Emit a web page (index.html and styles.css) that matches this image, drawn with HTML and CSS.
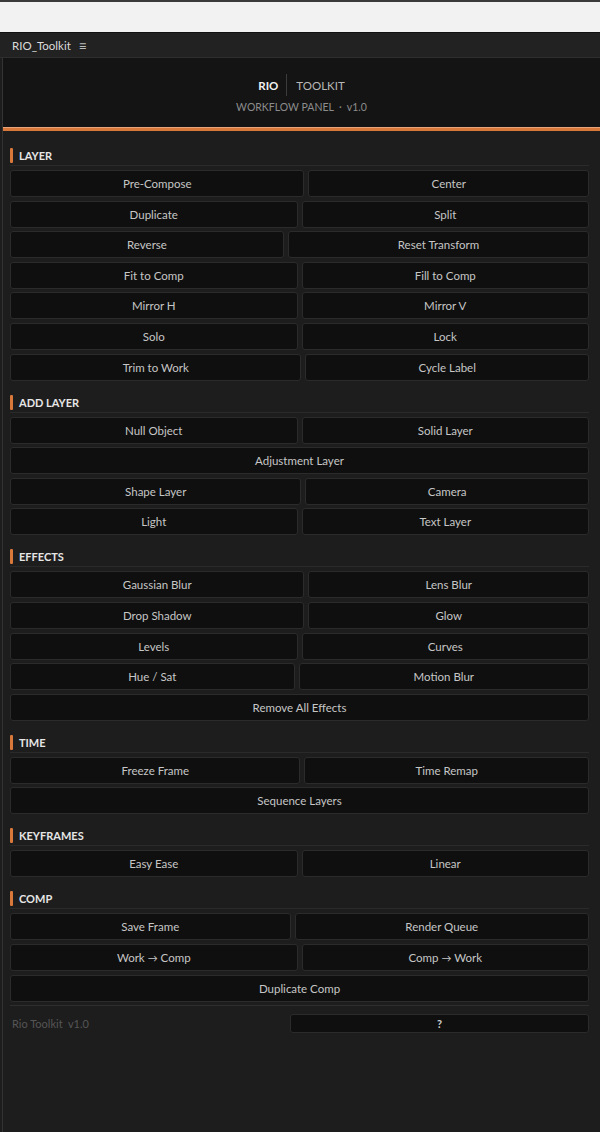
FILE: index.html
```html
<!DOCTYPE html>
<html lang="en">
<head>
    <meta charset="UTF-8">
    <meta name="viewport" content="width=device-width, initial-scale=1.0">
    <title>RIO Toolkit</title>
    <link rel="stylesheet" href="styles.css">
</head>
<body>
    <div class="chrome"></div>

    <div class="tabbar">
        <span class="tab-title">RIO_Toolkit</span>
        <span class="tab-menu">&#8801;</span>
    </div>

    <div class="panel">
        <header class="panel-head">
            <div class="brand">
                <span class="brand-main">RIO</span>
                <span class="brand-sep"></span>
                <span class="brand-sub">TOOLKIT</span>
            </div>
            <div class="brand-meta">WORKFLOW PANEL &nbsp;&middot;&nbsp; v1.0</div>
        </header>

        <main class="panel-body">
            <section class="group">
                <h2 class="group-title">LAYER</h2>
                <div class="rows">
                    <div class="row"><button class="btn wide-3">Pre-Compose</button><button class="btn">Center</button></div>
                    <div class="row"><button class="btn">Duplicate</button><button class="btn">Split</button></div>
                    <div class="row"><button class="btn">Reverse</button><button class="btn wide-4">Reset Transform</button></div>
                    <div class="row"><button class="btn">Fit to Comp</button><button class="btn">Fill to Comp</button></div>
                    <div class="row"><button class="btn">Mirror H</button><button class="btn">Mirror V</button></div>
                    <div class="row"><button class="btn">Solo</button><button class="btn">Lock</button></div>
                    <div class="row"><button class="btn wide-2">Trim to Work</button><button class="btn">Cycle Label</button></div>
                </div>
            </section>

            <section class="group">
                <h2 class="group-title">ADD LAYER</h2>
                <div class="rows">
                    <div class="row"><button class="btn">Null Object</button><button class="btn">Solid Layer</button></div>
                    <div class="row"><button class="btn">Adjustment Layer</button></div>
                    <div class="row"><button class="btn wide-2">Shape Layer</button><button class="btn">Camera</button></div>
                    <div class="row"><button class="btn">Light</button><button class="btn">Text Layer</button></div>
                </div>
            </section>

            <section class="group">
                <h2 class="group-title">EFFECTS</h2>
                <div class="rows">
                    <div class="row"><button class="btn wide-3">Gaussian Blur</button><button class="btn">Lens Blur</button></div>
                    <div class="row"><button class="btn wide-3">Drop Shadow</button><button class="btn">Glow</button></div>
                    <div class="row"><button class="btn">Levels</button><button class="btn">Curves</button></div>
                    <div class="row"><button class="btn">Hue / Sat</button><button class="btn wide-1">Motion Blur</button></div>
                    <div class="row"><button class="btn">Remove All Effects</button></div>
                </div>
            </section>

            <section class="group">
                <h2 class="group-title">TIME</h2>
                <div class="rows">
                    <div class="row"><button class="btn wide-1">Freeze Frame</button><button class="btn">Time Remap</button></div>
                    <div class="row"><button class="btn">Sequence Layers</button></div>
                </div>
            </section>

            <section class="group">
                <h2 class="group-title">KEYFRAMES</h2>
                <div class="rows">
                    <div class="row"><button class="btn">Easy Ease</button><button class="btn">Linear</button></div>
                </div>
            </section>

            <section class="group">
                <h2 class="group-title">COMP</h2>
                <div class="rows">
                    <div class="row"><button class="btn">Save Frame</button><button class="btn wide-3">Render Queue</button></div>
                    <div class="row"><button class="btn">Work <span class="arrow">&rarr;</span> Comp</button><button class="btn">Comp <span class="arrow">&rarr;</span> Work</button></div>
                    <div class="row"><button class="btn">Duplicate Comp</button></div>
                </div>
            </section>

            <footer class="panel-foot">
                <span class="foot-text">Rio Toolkit &nbsp;v1.0</span>
                <button class="btn help">?</button>
            </footer>
        </main>
    </div>
</body>
</html>
```

FILE: styles.css
```css
html, body {
    margin: 0;
    background-color: #1d1d1d;
}

body {
    font-family: Lato, "Open Sans", Arial, sans-serif;
    min-height: 1132px;
}

.chrome {
    height: 30px;
    background-color: #f2f2f2;
    border-top: 2px solid #3a3a3a;
}

.tabbar {
    height: 24px;
    display: flex;
    align-items: center;
    padding-left: 12px;
    background-color: #222;
    border-top: 1px solid #111;
    border-bottom: 1px solid #2e2e2e;
}

.tab-title {
    font-size: 11.5px;
    color: #dcdcdc;
}

.tab-menu {
    margin-left: 8px;
    font-size: 14px;
    color: #bbb;
}

.panel {
    margin-left: 2px;
    border-left: 1px solid #333;
    min-height: 1075px;
}

.panel-head {
    height: 52px;
    padding-top: 18px;
    background-color: #141414;
    border-bottom: 3px solid #d9783b;
    box-shadow: inset 0 -1px 0 #e9a37a;
    text-align: center;
}

.brand {
    display: flex;
    justify-content: center;
    align-items: center;
    height: 18px;
    font-size: 11.5px;
}

.brand-main {
    color: #f0f0f0;
    font-weight: bold;
}

.brand-sep {
    width: 1px;
    height: 22px;
    margin: 0 9px 0 8px;
    background-color: #3c3c3c;
}

.brand-sub {
    color: #b8b8b8;
}

.brand-meta {
    margin-top: 6px;
    font-size: 10.5px;
    line-height: 14px;
    color: #8c8c8c;
}

.panel-body {
    padding: 15px 11px 0 7px;
}

.group {
    margin-bottom: 12px;
}

.group-title {
    margin: 0 0 4px 0;
    height: 19px;
    display: flex;
    align-items: center;
    font-size: 11px;
    font-weight: bold;
    color: #e6e6e6;
    border-bottom: 1px solid #2a2a2a;
}

.group-title::before {
    content: "";
    width: 3px;
    height: 15px;
    margin-right: 6px;
    background-color: #d9783b;
    border-radius: 1px;
}

.rows {
    display: flex;
    flex-direction: column;
    gap: 3.6px;
}

.row {
    display: flex;
    gap: 4px;
}

.btn {
    flex: 1 1 0;
    height: 27px;
    padding: 0;
    font-family: inherit;
    font-size: 11.5px;
    color: #c6c6c6;
    background-color: #0f0f0f;
    border: 1px solid #2b2b2b;
    border-radius: 3px;
    cursor: pointer;
}

.btn:hover {
    background-color: #1a1a1a;
}

.arrow {
    font-size: 10px;
}

.wide-1 { flex-grow: 1.021; }
.wide-2 { flex-grow: 1.028; }
.wide-3 { flex-grow: 1.05; }
.wide-4 { flex-grow: 1.1; }

.panel-foot {
    display: flex;
    align-items: center;
    margin-top: -8.5px;
    padding-top: 8px;
    border-top: 1px solid #2e2e2e;
}

.foot-text {
    padding-left: 2px;
    font-size: 11px;
    color: #555;
}

.help {
    flex: 0 0 299px;
    height: 19px;
    margin-left: auto;
    font-weight: bold;
    font-size: 11px;
    color: #cfcfcf;
}
```
